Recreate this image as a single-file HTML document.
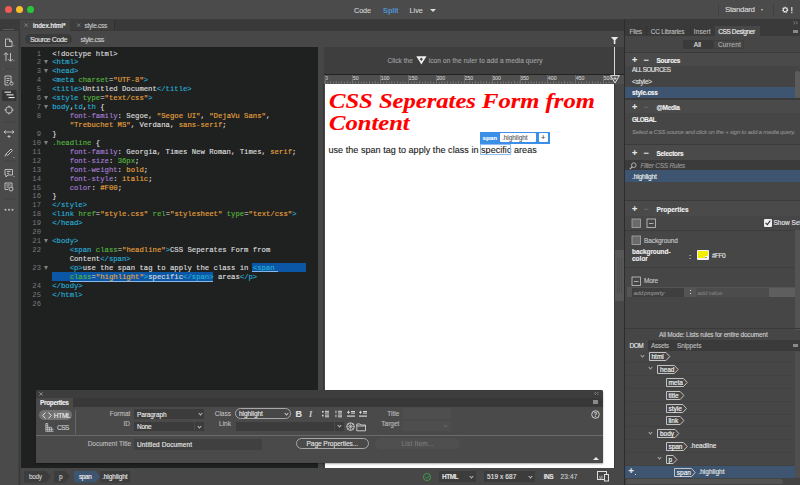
<!DOCTYPE html>
<html><head><meta charset="utf-8">
<style>
*{margin:0;padding:0;box-sizing:border-box}
html,body{width:800px;height:485px;overflow:hidden;background:#484848;font-family:"Liberation Sans",sans-serif;color:#ddd}
.a{position:absolute}
.t{position:absolute;white-space:pre;line-height:1;font-size:7.3px;-webkit-text-stroke:0.12px currentColor}
#code .l{position:absolute;left:52.2px;white-space:pre;font-family:"Liberation Mono",monospace;font-size:7.27px;line-height:9px;color:#dcdcdc;-webkit-text-stroke:0.15px currentColor}
#code .n{position:absolute;width:21px;left:20px;text-align:right;font-family:"Liberation Mono",monospace;font-size:7.2px;line-height:9px;color:#7a7a7a}
#code i{font-style:normal}
#code .fd{position:absolute;left:44px;width:0;height:0;border-left:2.6px solid transparent;border-right:2.6px solid transparent;border-top:4px solid #808080}
.rp{font-size:6.5px}.b{font-weight:bold}.pm{font-size:9px;color:#e8e8e8;font-weight:bold}
.tagb{position:absolute;height:7.6px;border:1px solid #dcdcdc;border-right:none;font-size:6.3px;line-height:5.6px;color:#f0f0f0;padding-left:1.8px;white-space:pre}
.taga{position:absolute;width:5.4px;height:5.4px;border-top:1px solid #dcdcdc;border-right:1px solid #dcdcdc;transform:rotate(45deg) scaleY(0.9)}
.chev{position:absolute;width:3px;height:3px;border-bottom:1px solid #aaa;border-right:1px solid #aaa;transform:rotate(45deg)}
.pl{color:#bdbdbd;text-align:right}
.tg{color:#27aed6}.at{color:#54b33e}.st{color:#e2a13f}.pr{color:#a57ed3}.gr{color:#74b84a}
</style></head><body>
<!-- title bar -->
<div class="a" style="left:0;top:0;width:800px;height:19px;background:#4b4b4b"></div>
<div class="a" style="left:4.5px;top:6px;width:7px;height:7px;border-radius:50%;background:#f25a55"></div>
<div class="a" style="left:15.5px;top:6px;width:7px;height:7px;border-radius:50%;background:#f7be2d"></div>
<div class="a" style="left:26.5px;top:6px;width:7px;height:7px;border-radius:50%;background:#2bc53c"></div>
<div class="t" style="left:354px;letter-spacing:-0.133px;top:7px;color:#d0d0d0">Code</div>
<div class="t" style="left:383px;letter-spacing:0.300px;top:7px;color:#4fa5e8">Split</div>
<div class="t" style="left:409.5px;letter-spacing:0.000px;top:7px;color:#d0d0d0">Live</div>
<div class="t" style="left:725px;letter-spacing:-0.343px;top:6px;color:#d8d8d8;font-size:8px">Standard</div>

<!-- doc tab bar -->
<div class="a" style="left:0;top:19px;width:625px;height:12px;background:#393939"></div>
<div class="a" style="left:20px;top:19px;width:50px;height:12px;background:#454545"></div>
<div class="a" style="left:70px;top:19.5px;width:43.5px;height:10.6px;background:#3d3d3d"></div>
<div class="a" style="left:113.5px;top:20px;width:0.8px;height:10px;background:#303030"></div>



<!-- sub bar -->
<div class="a" style="left:20px;top:31px;width:605px;height:16px;background:#474747"></div>
<div class="a" style="left:25px;top:34px;width:47px;height:10px;border-radius:5px;background:#3a3a3a"></div>
<div class="t" style="left:30px;letter-spacing:-0.500px;top:36px;color:#e0e0e0">Source Code</div>
<div class="t" style="left:80.5px;letter-spacing:-0.500px;top:36px;color:#c8c8c8">style.css</div>


<!-- left toolbar -->
<div class="a" style="left:0;top:19px;width:20px;height:12px;background:#3b3b3b"></div>
<div class="a" style="left:0;top:31px;width:18px;height:454px;background:#4a4a4a"></div>
<div class="a" style="left:18px;top:31px;width:3px;height:454px;background:#424242"></div>
<div class="a" style="left:19.2px;top:31px;width:0.8px;height:454px;background:#3a3a3a"></div>
<div class="a" style="left:3px;top:28.5px;width:11px;height:0.8px;background:#5a5a5a"></div>
<svg class="a" style="left:0;top:31px" width="19" height="190" viewBox="0 0 19 190">
<g fill="none" stroke="#c8c8c8" stroke-width="0.9">
<path d="M5.5 8 H9.5 L12 10.5 V15.5 H5.5 Z M9.5 8 V10.5 H12"/>
<path d="M6 22 V30 M3.8 24 L6 21.7 L8.2 24 M10.5 22 V30 M8.3 28 L10.5 30.3 L12.7 28"/>
<path d="M5 45 H11 V52 M5 45 V54 H9 M6.5 47.5 H9.5 M6.5 49.5 H9.5 M6.5 51.5 H8"/>
<circle cx="11.5" cy="52.5" r="1.6"/>
<circle cx="9" cy="79" r="3.3"/>
<path d="M9 74.5 V76.5 M9 81.5 V83.5 M4.5 79 H6.5 M11.5 79 H13.5"/>
<path d="M4 101 H14 M4 101 L5.8 99.5 M4 101 L5.8 102.5 M14 101 L12.2 99.5 M14 101 L12.2 102.5"/>
<path d="M9 104 V107 M7.5 105.5 H10.5"/>
<path d="M6 123 L11 118 L12.5 119.5 L7.5 124.5 Z M5 125.5 L6 123"/>
<path d="M5 138.5 H12.5 V144 H8 L6 146 V144 H5 Z M7 140.5 H10.5 M7 142.3 H9"/>
<path d="M5 152 H12 V157 M5 152 V158.5 H8 M6.5 154 H10.5 M6.5 156 H9"/>
<circle cx="11" cy="158" r="2"/>
</g>
<g fill="#bdbdbd"><rect x="3" y="37.5" width="0.8" height="0.8"/><rect x="13.5" y="14.3" width="0.9" height="0.9"/><rect x="13.5" y="29.3" width="0.9" height="0.9"/><rect x="13.5" y="126" width="0.9" height="0.9"/><rect x="13.5" y="145" width="0.9" height="0.9"/>
<circle cx="5.5" cy="178.7" r="1"/><circle cx="9" cy="178.7" r="1"/><circle cx="12.5" cy="178.7" r="1"/></g>
<g fill="#434343"><rect x="3" y="37.6" width="13" height="0.9"/><rect x="3" y="90.5" width="13" height="0.9"/><rect x="3" y="129.5" width="13" height="0.9"/><rect x="3" y="167.5" width="13" height="0.9"/></g>
<rect x="2" y="59" width="14.5" height="11" fill="#353535" rx="1"/>
<g fill="#e8e8e8"><rect x="4.5" y="60.6" width="6.5" height="1.1"/><rect x="6.5" y="63.3" width="7" height="1.1"/><rect x="8.5" y="66" width="6" height="1.1"/></g>
</svg>
<!-- title extras -->
<div class="a" style="left:0;top:19px;width:800px;height:0.8px;background:#3c3c3c"></div>
<div class="a" style="left:717.5px;top:4px;width:0.8px;height:11px;background:#3f3f3f"></div>
<div class="a" style="left:773px;top:4px;width:0.8px;height:11px;background:#3f3f3f"></div>
<div class="a" style="left:761px;top:8.8px;width:0;height:0;border-left:1.8px solid transparent;border-right:1.8px solid transparent;border-top:2px solid #ccc"></div>
<div class="a" style="left:429.5px;top:9px;width:0;height:0;border-left:3px solid transparent;border-right:3px solid transparent;border-top:3px solid #ddd"></div>
<svg class="a" style="left:780.5px;top:5.5px" width="13" height="8"><circle cx="4.2" cy="3.8" r="2.4" fill="none" stroke="#eee" stroke-width="1.3" stroke-dasharray="1.2 0.7"/><circle cx="4.2" cy="3.8" r="1.9" fill="none" stroke="#eee" stroke-width="0.9"/><rect x="10.2" y="1" width="1.2" height="4.3" fill="#ddd"/><rect x="10.2" y="6" width="1.2" height="1.2" fill="#ddd"/></svg>
<svg class="a" style="left:23.5px;top:23px" width="60" height="5"><path d="M0.5 0.5 L3.8 3.8 M3.8 0.5 L0.5 3.8 M53 0.5 L56.3 3.8 M56.3 0.5 L53 3.8" stroke="#8a8a8a" stroke-width="0.8"/></svg>
<div class="t rp" style="left:33px;letter-spacing:0.040px;top:22.6px;color:#f4f4f4;-webkit-text-stroke:0.2px #f4f4f4">index.html*</div>
<div class="t rp" style="left:84.4px;letter-spacing:-0.250px;top:22.6px;color:#c8c8c8">style.css</div>
<!-- code editor -->
<div class="a" style="left:21px;top:47px;width:297px;height:421px;background:#1f2020"></div>
<div id="code"><div class="a" style="left:252.2px;top:262.9px;width:54.2px;height:9.1px;background:#0b57a6"></div><div class="a" style="left:52.2px;top:272px;width:161px;height:9.4px;background:#0b57a6"></div><div class="a" style="left:252.2px;top:271.3px;width:26px;height:0.9px;background:#8ab8e6"></div><div class="a" style="left:69.6px;top:280.7px;width:143.6px;height:0.9px;background:#8ab8e6"></div><div class="n" style="top:49.50px">1</div>
<div class="l" style="top:49.50px">&lt;!doctype html&gt;</div>
<div class="n" style="top:58.44px">2</div>
<div class="fd" style="top:60.44px"></div>
<div class="l" style="top:58.44px"><i class="tg">&lt;html&gt;</i></div>
<div class="n" style="top:67.37px">3</div>
<div class="fd" style="top:69.37px"></div>
<div class="l" style="top:67.37px"><i class="tg">&lt;head&gt;</i></div>
<div class="n" style="top:76.31px">4</div>
<div class="l" style="top:76.31px"><i class="tg">&lt;meta</i> <i class="at">charset</i>=<i class="st">"UTF-8"</i><i class="tg">&gt;</i></div>
<div class="n" style="top:85.24px">5</div>
<div class="l" style="top:85.24px"><i class="tg">&lt;title&gt;</i>Untitled Document<i class="tg">&lt;/title&gt;</i></div>
<div class="n" style="top:94.18px">6</div>
<div class="fd" style="top:96.18px"></div>
<div class="l" style="top:94.18px"><i class="tg">&lt;style</i> <i class="at">type</i>=<i class="st">"text/css"</i><i class="tg">&gt;</i></div>
<div class="n" style="top:103.11px">7</div>
<div class="fd" style="top:105.11px"></div>
<div class="l" style="top:103.11px"><i class="tg">body</i>,<i class="tg">td</i>,<i class="tg">th</i> {</div>
<div class="n" style="top:112.05px">8</div>
<div class="l" style="top:112.05px">    <i class="pr">font-family</i>: Segoe, <i class="st">"Segoe UI"</i>, <i class="st">"DejaVu Sans"</i>,</div>
<div class="l" style="top:120.98px">    <i class="st">"Trebuchet MS"</i>, Verdana, <i class="st">sans-serif</i>;</div>
<div class="n" style="top:129.92px">9</div>
<div class="l" style="top:129.92px">}</div>
<div class="n" style="top:138.85px">10</div>
<div class="fd" style="top:140.85px"></div>
<div class="l" style="top:138.85px"><i class="at">.headline</i> {</div>
<div class="n" style="top:147.79px">11</div>
<div class="l" style="top:147.79px">    <i class="pr">font-family</i>: Georgia, Times New Roman, Times, <i class="st">serif</i>;</div>
<div class="n" style="top:156.72px">12</div>
<div class="l" style="top:156.72px">    <i class="pr">font-size</i>: <i class="at">36px</i>;</div>
<div class="n" style="top:165.66px">13</div>
<div class="l" style="top:165.66px">    <i class="pr">font-weight</i>: <i class="st">bold</i>;</div>
<div class="n" style="top:174.59px">14</div>
<div class="l" style="top:174.59px">    <i class="pr">font-style</i>: <i class="st">italic</i>;</div>
<div class="n" style="top:183.53px">15</div>
<div class="l" style="top:183.53px">    <i class="pr">color</i>: <i class="st">#F00</i>;</div>
<div class="n" style="top:192.46px">16</div>
<div class="l" style="top:192.46px">}</div>
<div class="n" style="top:201.40px">17</div>
<div class="l" style="top:201.40px"><i class="tg">&lt;/style&gt;</i></div>
<div class="n" style="top:210.33px">18</div>
<div class="l" style="top:210.33px"><i class="tg">&lt;link</i> <i class="at">href</i>=<i class="st">"style.css"</i> <i class="at">rel</i>=<i class="st">"stylesheet"</i> <i class="at">type</i>=<i class="st">"text/css"</i><i class="tg">&gt;</i></div>
<div class="n" style="top:219.27px">19</div>
<div class="l" style="top:219.27px"><i class="tg">&lt;/head&gt;</i></div>
<div class="n" style="top:228.20px">20</div>
<div class="l" style="top:228.20px"></div>
<div class="n" style="top:237.14px">21</div>
<div class="fd" style="top:239.14px"></div>
<div class="l" style="top:237.14px"><i class="tg">&lt;body&gt;</i></div>
<div class="n" style="top:246.07px">22</div>
<div class="l" style="top:246.07px">    <i class="tg">&lt;span</i> <i class="at">class</i>=<i class="st">"headline"</i><i class="tg">&gt;</i>CSS Seperates Form from</div>
<div class="l" style="top:255.01px">    Content<i class="tg">&lt;/span&gt;</i></div>
<div class="n" style="top:263.94px">23</div>
<div class="fd" style="top:265.94px"></div>
<div class="l" style="top:263.94px">    <i class="tg">&lt;p&gt;</i>use the span tag to apply the class in <i class="tg">&lt;span</i></div>
<div class="l" style="top:272.88px">    <i class="at">class</i>=<i class="st">"highlight"</i><i class="tg">&gt;</i>specific<i class="tg">&lt;/span&gt;</i> areas<i class="tg">&lt;/p&gt;</i></div>
<div class="n" style="top:281.81px">24</div>
<div class="l" style="top:281.81px"><i class="tg">&lt;/body&gt;</i></div>
<div class="n" style="top:290.75px">25</div>
<div class="l" style="top:290.75px"><i class="tg">&lt;/html&gt;</i></div>
<div class="n" style="top:299.68px">26</div>
<div class="l" style="top:299.68px"></div>
</div>

<!-- splitter -->
<div class="a" style="left:318px;top:47px;width:6px;height:421px;background:#464646"></div>


<!-- design view -->
<div class="a" style="left:324px;top:47px;width:300px;height:27px;background:#3e3e3e"></div>
<div class="a" style="left:324px;top:73.5px;width:300px;height:1.5px;background:#232323"></div>
<div class="a" style="left:324px;top:75px;width:300px;height:9px;background:#4f4f4f"></div>
<svg class="a" style="left:324px;top:75px" width="300" height="9"><g fill="#8a8a8a"><rect x="0.60" y="6.3" width="0.8" height="2.2"/><rect x="3.39" y="7.0" width="0.8" height="1.5"/><rect x="6.17" y="6.3" width="0.8" height="2.2"/><rect x="8.96" y="7.0" width="0.8" height="1.5"/><rect x="11.74" y="6.3" width="0.8" height="2.2"/><rect x="14.53" y="7.0" width="0.8" height="1.5"/><rect x="17.31" y="6.3" width="0.8" height="2.2"/><rect x="20.10" y="7.0" width="0.8" height="1.5"/><rect x="22.88" y="6.3" width="0.8" height="2.2"/><rect x="25.67" y="7.0" width="0.8" height="1.5"/><rect x="28.45" y="6.3" width="0.8" height="2.2"/><rect x="31.24" y="7.0" width="0.8" height="1.5"/><rect x="34.02" y="6.3" width="0.8" height="2.2"/><rect x="36.81" y="7.0" width="0.8" height="1.5"/><rect x="39.59" y="6.3" width="0.8" height="2.2"/><rect x="42.38" y="7.0" width="0.8" height="1.5"/><rect x="45.16" y="6.3" width="0.8" height="2.2"/><rect x="47.95" y="7.0" width="0.8" height="1.5"/><rect x="50.73" y="6.3" width="0.8" height="2.2"/><rect x="53.52" y="7.0" width="0.8" height="1.5"/><rect x="56.30" y="6.3" width="0.8" height="2.2"/><rect x="59.09" y="7.0" width="0.8" height="1.5"/><rect x="61.87" y="6.3" width="0.8" height="2.2"/><rect x="64.66" y="7.0" width="0.8" height="1.5"/><rect x="67.44" y="6.3" width="0.8" height="2.2"/><rect x="70.23" y="7.0" width="0.8" height="1.5"/><rect x="73.01" y="6.3" width="0.8" height="2.2"/><rect x="75.80" y="7.0" width="0.8" height="1.5"/><rect x="78.58" y="6.3" width="0.8" height="2.2"/><rect x="81.37" y="7.0" width="0.8" height="1.5"/><rect x="84.15" y="6.3" width="0.8" height="2.2"/><rect x="86.94" y="7.0" width="0.8" height="1.5"/><rect x="89.72" y="6.3" width="0.8" height="2.2"/><rect x="92.50" y="7.0" width="0.8" height="1.5"/><rect x="95.29" y="6.3" width="0.8" height="2.2"/><rect x="98.08" y="7.0" width="0.8" height="1.5"/><rect x="100.86" y="6.3" width="0.8" height="2.2"/><rect x="103.65" y="7.0" width="0.8" height="1.5"/><rect x="106.43" y="6.3" width="0.8" height="2.2"/><rect x="109.22" y="7.0" width="0.8" height="1.5"/><rect x="112.00" y="6.3" width="0.8" height="2.2"/><rect x="114.79" y="7.0" width="0.8" height="1.5"/><rect x="117.57" y="6.3" width="0.8" height="2.2"/><rect x="120.36" y="7.0" width="0.8" height="1.5"/><rect x="123.14" y="6.3" width="0.8" height="2.2"/><rect x="125.93" y="7.0" width="0.8" height="1.5"/><rect x="128.71" y="6.3" width="0.8" height="2.2"/><rect x="131.50" y="7.0" width="0.8" height="1.5"/><rect x="134.28" y="6.3" width="0.8" height="2.2"/><rect x="137.07" y="7.0" width="0.8" height="1.5"/><rect x="139.85" y="6.3" width="0.8" height="2.2"/><rect x="142.64" y="7.0" width="0.8" height="1.5"/><rect x="145.42" y="6.3" width="0.8" height="2.2"/><rect x="148.21" y="7.0" width="0.8" height="1.5"/><rect x="150.99" y="6.3" width="0.8" height="2.2"/><rect x="153.78" y="7.0" width="0.8" height="1.5"/><rect x="156.56" y="6.3" width="0.8" height="2.2"/><rect x="159.35" y="7.0" width="0.8" height="1.5"/><rect x="162.13" y="6.3" width="0.8" height="2.2"/><rect x="164.92" y="7.0" width="0.8" height="1.5"/><rect x="167.70" y="6.3" width="0.8" height="2.2"/><rect x="170.49" y="7.0" width="0.8" height="1.5"/><rect x="173.27" y="6.3" width="0.8" height="2.2"/><rect x="176.06" y="7.0" width="0.8" height="1.5"/><rect x="178.84" y="6.3" width="0.8" height="2.2"/><rect x="181.62" y="7.0" width="0.8" height="1.5"/><rect x="184.41" y="6.3" width="0.8" height="2.2"/><rect x="187.20" y="7.0" width="0.8" height="1.5"/><rect x="189.98" y="6.3" width="0.8" height="2.2"/><rect x="192.77" y="7.0" width="0.8" height="1.5"/><rect x="195.55" y="6.3" width="0.8" height="2.2"/><rect x="198.34" y="7.0" width="0.8" height="1.5"/><rect x="201.12" y="6.3" width="0.8" height="2.2"/><rect x="203.90" y="7.0" width="0.8" height="1.5"/><rect x="206.69" y="6.3" width="0.8" height="2.2"/><rect x="209.48" y="7.0" width="0.8" height="1.5"/><rect x="212.26" y="6.3" width="0.8" height="2.2"/><rect x="215.05" y="7.0" width="0.8" height="1.5"/><rect x="217.83" y="6.3" width="0.8" height="2.2"/><rect x="220.62" y="7.0" width="0.8" height="1.5"/><rect x="223.40" y="6.3" width="0.8" height="2.2"/><rect x="226.18" y="7.0" width="0.8" height="1.5"/><rect x="228.97" y="6.3" width="0.8" height="2.2"/><rect x="231.76" y="7.0" width="0.8" height="1.5"/><rect x="234.54" y="6.3" width="0.8" height="2.2"/><rect x="237.33" y="7.0" width="0.8" height="1.5"/><rect x="240.11" y="6.3" width="0.8" height="2.2"/><rect x="242.89" y="7.0" width="0.8" height="1.5"/><rect x="245.68" y="6.3" width="0.8" height="2.2"/><rect x="248.47" y="7.0" width="0.8" height="1.5"/><rect x="251.25" y="6.3" width="0.8" height="2.2"/><rect x="254.04" y="7.0" width="0.8" height="1.5"/><rect x="256.82" y="6.3" width="0.8" height="2.2"/><rect x="259.61" y="7.0" width="0.8" height="1.5"/><rect x="262.39" y="6.3" width="0.8" height="2.2"/><rect x="265.17" y="7.0" width="0.8" height="1.5"/><rect x="267.96" y="6.3" width="0.8" height="2.2"/><rect x="270.75" y="7.0" width="0.8" height="1.5"/><rect x="273.53" y="6.3" width="0.8" height="2.2"/><rect x="276.32" y="7.0" width="0.8" height="1.5"/><rect x="279.10" y="6.3" width="0.8" height="2.2"/><rect x="281.88" y="7.0" width="0.8" height="1.5"/><rect x="284.67" y="6.3" width="0.8" height="2.2"/><rect x="287.46" y="7.0" width="0.8" height="1.5"/></g></svg>
<div class="t" style="left:325.00px;top:76.3px;font-size:5.3px;color:#c8c8c8">0</div>
<div class="a" style="left:324.60px;top:75px;width:0.8px;height:9px;background:#6e6e6e"></div>
<div class="t" style="left:352.85px;top:76.3px;font-size:5.3px;color:#c8c8c8">50</div>
<div class="a" style="left:352.45px;top:75px;width:0.8px;height:9px;background:#6e6e6e"></div>
<div class="t" style="left:380.70px;top:76.3px;font-size:5.3px;color:#c8c8c8">100</div>
<div class="a" style="left:380.30px;top:75px;width:0.8px;height:9px;background:#6e6e6e"></div>
<div class="t" style="left:408.55px;top:76.3px;font-size:5.3px;color:#c8c8c8">150</div>
<div class="a" style="left:408.15px;top:75px;width:0.8px;height:9px;background:#6e6e6e"></div>
<div class="t" style="left:436.40px;top:76.3px;font-size:5.3px;color:#c8c8c8">200</div>
<div class="a" style="left:436.00px;top:75px;width:0.8px;height:9px;background:#6e6e6e"></div>
<div class="t" style="left:464.25px;top:76.3px;font-size:5.3px;color:#c8c8c8">250</div>
<div class="a" style="left:463.85px;top:75px;width:0.8px;height:9px;background:#6e6e6e"></div>
<div class="t" style="left:492.10px;top:76.3px;font-size:5.3px;color:#c8c8c8">300</div>
<div class="a" style="left:491.70px;top:75px;width:0.8px;height:9px;background:#6e6e6e"></div>
<div class="t" style="left:519.95px;top:76.3px;font-size:5.3px;color:#c8c8c8">350</div>
<div class="a" style="left:519.55px;top:75px;width:0.8px;height:9px;background:#6e6e6e"></div>
<div class="t" style="left:547.80px;top:76.3px;font-size:5.3px;color:#c8c8c8">400</div>
<div class="a" style="left:547.40px;top:75px;width:0.8px;height:9px;background:#6e6e6e"></div>
<div class="t" style="left:575.65px;top:76.3px;font-size:5.3px;color:#c8c8c8">450</div>
<div class="a" style="left:575.25px;top:75px;width:0.8px;height:9px;background:#6e6e6e"></div>
<div class="t" style="left:603.50px;top:76.3px;font-size:5.3px;color:#c8c8c8">500</div>
<div class="a" style="left:603.10px;top:75px;width:0.8px;height:9px;background:#6e6e6e"></div>
<div class="a" style="left:324.5px;top:84px;width:289.5px;height:384px;background:#fff"></div>
<div class="a" style="left:323.3px;top:84px;width:1.2px;height:384px;background:#353535"></div>
<div class="a" style="left:614px;top:84px;width:10px;height:384px;background:#474747"></div>
<div class="a" style="left:614px;top:84px;width:1px;height:384px;background:#3a3a3a"></div>
<div class="a" style="left:615px;top:250px;width:8.5px;height:51px;background:#575757"></div>
<svg class="a" style="left:616px;top:258px" width="7" height="35"><g fill="#4a4a4a"><rect x="1" y="0" width="0.7" height="35"/><rect x="3" y="0" width="0.7" height="35"/><rect x="5" y="0" width="0.7" height="35"/></g></svg>
<div class="t rp" style="left:387.5px;letter-spacing:0.050px;top:58.3px;color:#a0a0a0">Click the</div>
<svg class="a" style="left:415.5px;top:55.6px" width="11" height="9"><path d="M0.3 0.3 H10.5 L5.4 8.5 Z" fill="#f0f0f0"/><path d="M5.3 1.6 L6.9 3.3 L5.3 5 L3.7 3.3 Z" fill="#444"/></svg>
<div class="t rp" style="left:428.7px;letter-spacing:0.119px;top:58.3px;color:#a0a0a0">icon on the ruler to add a media query</div>
<div class="a" style="left:613.8px;top:47px;width:0.9px;height:29px;background:#d8d8d8"></div>
<svg class="a" style="left:610.8px;top:36.5px" width="7.5" height="7.5"><path d="M0 0 H7.2 L4.4 3.2 V7.2 H2.8 V3.2 Z" fill="#e8e8e8"/></svg>
<svg class="a" style="left:609.5px;top:74.8px" width="10" height="9"><path d="M0.6 0.6 H9.4 L5 8 Z" fill="#555" stroke="#e0e0e0" stroke-width="1"/><path d="M5 1.8 V5 M3.4 3.4 H6.6" stroke="#e0e0e0" stroke-width="0.8"/></svg>
<div class="t" style="left:329.3px;top:89.5px;font-family:'Liberation Serif',serif;font-weight:bold;font-style:italic;font-size:22px;color:#fe0000;transform:scaleX(1.118);transform-origin:0 0">CSS Seperates Form from</div>
<div class="t" style="left:329.3px;top:112px;font-family:'Liberation Serif',serif;font-weight:bold;font-style:italic;font-size:22px;color:#fe0000;transform:scaleX(1.118);transform-origin:0 0">Content</div>
<div class="t" style="left:328.5px;top:145.8px;font-size:9px;color:#1a1a1a;letter-spacing:0.05px">use the span tag to apply the class in specific areas</div>
<div class="a" style="left:480px;top:144px;width:30.5px;height:10.5px;border:1px solid #8fbdf0"></div>
<div class="a" style="left:480px;top:131.7px;width:70.4px;height:12px;background:#3b8fe6"></div>
<div class="t b" style="left:482.5px;top:134.5px;font-size:6.2px;color:#fff">span</div>
<div class="a" style="left:499.8px;top:133.4px;width:36px;height:8.6px;background:#fff;border-radius:1px"></div>
<div class="t" style="left:502px;top:134.8px;font-size:6.4px;color:#5a5a5a">.highlight</div>
<div class="a" style="left:538.8px;top:133.4px;width:9px;height:8.6px;background:#fff;border-radius:1px"></div>
<div class="t" style="left:541.1px;top:133.6px;font-size:7.5px;color:#444">+</div>
<!-- right panel -->
<div class="a" style="left:624px;top:19px;width:1px;height:466px;background:#2c2c2c"></div>
<div class="a" style="left:625px;top:19px;width:175px;height:466px;background:#464646"></div>
<div class="a" style="left:625px;top:19px;width:175px;height:16.5px;background:#3a3a3a"></div>
<svg class="a" style="left:793px;top:20.5px" width="6" height="4"><path d="M0.5 0.3 L2 1.8 L0.5 3.3 M3 0.3 L4.5 1.8 L3 3.3" fill="none" stroke="#9a9a9a" stroke-width="0.7"/></svg>
<div class="a" style="left:646px;top:26px;width:1px;height:9.5px;background:#333"></div>
<div class="a" style="left:690px;top:26px;width:1px;height:9.5px;background:#333"></div>
<div class="a" style="left:715px;top:25.5px;width:45px;height:10px;background:#474747"></div>
<div class="t rp" style="left:629.5px;letter-spacing:-0.300px;top:28.5px;color:#bdbdbd">Files</div>
<div class="t rp" style="left:650.8px;letter-spacing:-0.218px;top:28.5px;color:#bdbdbd">CC Libraries</div>
<div class="t rp" style="left:693.8px;letter-spacing:0.080px;top:28.5px;color:#bdbdbd">Insert</div>
<div class="t rp" style="left:718.3px;letter-spacing:-0.400px;top:28.5px;color:#f0f0f0">CSS Designer</div>
<div class="a" style="left:793px;top:29.5px;width:5px;height:3.5px;background:#8a8a8a"></div>
<!-- all/current -->
<div class="a" style="left:683px;top:39.5px;width:30px;height:9.7px;background:#3a3a3a;border-radius:1px"></div>
<div class="a" style="left:713px;top:39.5px;width:31px;height:9.7px;border:1px solid #3e3e3e;border-radius:1px"></div>
<div class="t rp" style="left:693.8px;letter-spacing:-0.000px;top:42px;color:#e0e0e0">All</div>
<div class="t rp" style="left:717.9px;letter-spacing:0.200px;top:42px;color:#b0b0b0">Current</div>
<!-- sources -->
<div class="a" style="left:625px;top:52px;width:175px;height:1px;background:#3a3a3a"></div>
<div class="a" style="left:625px;top:53px;width:175px;height:12.5px;background:#4a4a4a"></div>
<div class="a" style="left:625px;top:65.5px;width:170px;height:21px;background:#444"></div>
<div class="a" style="left:625px;top:86.6px;width:170px;height:11.4px;background:#3d5570"></div>
<div class="a" style="left:795px;top:70.5px;width:5px;height:28px;background:#5c5c5c;border-radius:2px"></div>
<div class="t rp pm" style="left:632px;top:56px">+</div>
<div class="t rp pm" style="left:643.5px;top:56px">&#8722;</div>
<div class="t rp b" style="left:656.4px;letter-spacing:-0.267px;top:58px;color:#f2f2f2">Sources</div>
<div class="t rp" style="left:632px;letter-spacing:-0.500px;top:67.3px;color:#e6e6e6;font-size:6.3px">ALL SOURCES</div>
<div class="t rp" style="left:632px;letter-spacing:-0.133px;top:78.5px;color:#e6e6e6">&lt;style&gt;</div>
<div class="t rp b" style="left:632px;letter-spacing:-0.200px;top:89.8px;color:#f5f5f5">style.css</div>
<!-- media -->
<div class="a" style="left:625px;top:98px;width:175px;height:1.5px;background:#3a3a3a"></div>
<div class="a" style="left:625px;top:99.5px;width:175px;height:13.5px;background:#4a4a4a"></div>
<div class="t rp pm" style="left:632px;top:103px">+</div>
<div class="t rp pm" style="left:643.5px;top:103px;color:#666">&#8722;</div>
<div class="t rp b" style="left:656.4px;letter-spacing:-0.240px;top:105px;color:#f2f2f2">@Media</div>
<div class="t rp b" style="left:632px;letter-spacing:-0.500px;top:117.3px;color:#f0f0f0;font-size:6.4px">GLOBAL</div>
<div class="t rp" style="left:632px;letter-spacing:-0.238px;top:128.5px;color:#8c8c8c;font-style:italic;font-size:6.1px">Select a CSS source and click on the + sign to add a media query.</div>
<!-- selectors -->
<div class="a" style="left:625px;top:143.5px;width:175px;height:1.5px;background:#3a3a3a"></div>
<div class="a" style="left:625px;top:145px;width:175px;height:15px;background:#4a4a4a"></div>
<div class="t rp pm" style="left:632px;top:149px">+</div>
<div class="t rp pm" style="left:643.5px;top:149px">&#8722;</div>
<div class="t rp b" style="left:656.4px;letter-spacing:-0.250px;top:150.7px;color:#f2f2f2">Selectors</div>
<div class="a" style="left:625px;top:160px;width:175px;height:10.3px;background:#3b3b3b"></div>
<div class="t rp" style="left:640.5px;letter-spacing:-0.213px;top:162.5px;color:#9a9a9a;font-style:italic">Filter CSS Rules</div>
<div class="a" style="left:625px;top:170.3px;width:175px;height:12.2px;background:#3d5570"></div>
<div class="t rp" style="left:632px;letter-spacing:-0.133px;top:173.5px;color:#f5f5f5">.highlight</div>
<!-- properties -->
<div class="a" style="left:625px;top:199.5px;width:175px;height:1.5px;background:#3a3a3a"></div>
<div class="a" style="left:625px;top:201px;width:175px;height:14.5px;background:#4a4a4a"></div>
<div class="t rp pm" style="left:632px;top:204.5px">+</div>
<div class="t rp pm" style="left:643.5px;top:204.5px;color:#666">&#8722;</div>
<div class="t rp b" style="left:656.4px;top:206.5px;color:#f2f2f2">Properties</div>
<div class="a" style="left:625px;top:229.5px;width:175px;height:1px;background:#3c3c3c"></div>
<div class="t rp" style="left:773.5px;top:220.3px;color:#ececec">Show Set</div>
<div class="a" style="left:764px;top:219.2px;width:7.6px;height:7.6px;background:#eee;border-radius:1px"></div>
<svg class="a" style="left:764px;top:219.2px" width="8" height="8"><path d="M1.6 3.8 L3.3 5.6 L6.3 1.6" fill="none" stroke="#333" stroke-width="1.1"/></svg>
<svg class="a" style="left:631px;top:217.5px" width="30" height="11"><rect x="1" y="1" width="8.5" height="8.5" fill="#6a6a6a" stroke="#aaa" stroke-width="0.8"/><rect x="16" y="1" width="8.5" height="8.5" fill="none" stroke="#c8c8c8" stroke-width="0.8"/><rect x="18" y="5" width="4.5" height="0.8" fill="#c8c8c8"/></svg>
<svg class="a" style="left:631px;top:235px" width="11" height="11"><rect x="1" y="1" width="8.5" height="8.5" fill="#6a6a6a" stroke="#aaa" stroke-width="0.8"/></svg>
<svg class="a" style="left:631px;top:275.5px" width="11" height="11"><rect x="1" y="1" width="8.5" height="8.5" fill="none" stroke="#c8c8c8" stroke-width="0.8"/><rect x="3" y="5" width="4.5" height="0.8" fill="#c8c8c8"/></svg>
<svg class="a" style="left:628.5px;top:161.8px" width="8" height="8"><circle cx="4.8" cy="3.2" r="2.3" fill="none" stroke="#bbb" stroke-width="0.9"/><path d="M3.2 4.8 L0.8 7.2" stroke="#bbb" stroke-width="1.1"/></svg>
<div class="t rp" style="left:644px;letter-spacing:-0.089px;top:237.5px;color:#c8c8c8">Background</div>
<div class="t rp b" style="left:632px;letter-spacing:-0.080px;top:248.8px;color:#f0f0f0">background-</div>
<div class="t rp b" style="left:632px;top:256px;color:#f0f0f0">color</div>
<div class="t rp b" style="left:689px;top:253.5px;color:#ccc">:</div>
<div class="a" style="left:697px;top:250px;width:12px;height:9.8px;background:#f4f4f4;border-radius:1px"></div>
<div class="a" style="left:698.4px;top:251.4px;width:9.2px;height:7px;background:#f2ef00"></div>
<div class="a" style="left:704.6px;top:256.2px;width:3px;height:2.2px;background:#fff"></div>
<div class="a" style="left:705.3px;top:256.8px;width:0;height:0;border-left:0.9px solid transparent;border-right:0.9px solid transparent;border-top:1.2px solid #333"></div>
<div class="t rp" style="left:712px;letter-spacing:-0.500px;top:253.2px;color:#e6e6e6">#FF0</div>
<div class="a" style="left:625px;top:267px;width:170px;height:1px;background:#3e3e3e"></div>
<div class="t rp" style="left:644px;letter-spacing:-0.267px;top:277.5px;color:#c8c8c8">More</div>
<div class="a" style="left:626.5px;top:286.8px;width:168px;height:10.6px;background:#545454"></div>
<div class="a" style="left:632px;top:287.5px;width:51.5px;height:9.4px;background:#3f3f3f"></div>
<div class="a" style="left:696px;top:287.5px;width:72.5px;height:9.4px;background:#4c4c4c"></div>
<div class="a" style="left:768.5px;top:287.5px;width:26px;height:9.4px;background:#5e5e5e"></div>
<div class="a" style="left:689.5px;top:290px;width:1.2px;height:1.2px;background:#ddd"></div><div class="a" style="left:689.5px;top:293px;width:1.2px;height:1.2px;background:#ddd"></div>
<div class="t rp" style="left:633.5px;letter-spacing:-0.364px;top:289.8px;color:#8a8a8a;font-style:italic;font-size:6.2px">add property</div>
<div class="t rp" style="left:697.5px;letter-spacing:-0.250px;top:289.8px;color:#7a7a7a;font-style:italic;font-size:6.2px">add value</div>
<div class="a" style="left:795px;top:230px;width:5px;height:100px;background:#535353"></div>
<div class="a" style="left:625px;top:328px;width:175px;height:1px;background:#3a3a3a"></div>
<div class="t rp" style="left:659px;letter-spacing:-0.180px;top:331.5px;color:#cfcfcf">All Mode: Lists rules for entire document</div>
<!-- DOM -->
<div class="a" style="left:625px;top:340px;width:175px;height:10.5px;background:#3a3a3a"></div>
<div class="a" style="left:625px;top:340px;width:23px;height:10.5px;background:#474747"></div>
<div class="t rp" style="left:629.5px;letter-spacing:-0.500px;top:342.7px;color:#f0f0f0">DOM</div>
<div class="t rp" style="left:651px;letter-spacing:-0.320px;top:342.7px;color:#bdbdbd">Assets</div>
<div class="t rp" style="left:677px;letter-spacing:-0.114px;top:342.7px;color:#bdbdbd">Snippets</div>
<div class="a" style="left:793px;top:343.5px;width:5px;height:3.5px;background:#8a8a8a"></div>
<div class="a" style="left:625px;top:362.15px;width:170px;height:1px;background:#424242"></div>
<div class="chev" style="left:640.60px;top:353.60px"></div>
<svg class="a" style="left:648.60px;top:352px" width="22.0" height="9" viewBox="0 0 22.0 9"><path d="M0.5 0.5 H17.0 L20.7 4.5 L17.0 8.5 H0.5 Z" fill="none" stroke="#c4c4c4" stroke-width="1" stroke-linejoin="round"/></svg>
<div class="t" style="left:651.50px;top:353.60px;font-size:6.5px;color:#f4f4f4;-webkit-text-stroke:0.15px #f4f4f4">html</div>
<div class="a" style="left:625px;top:375.00px;width:170px;height:1px;background:#424242"></div>
<div class="chev" style="left:649.05px;top:366.45px"></div>
<svg class="a" style="left:657.05px;top:365px" width="22.4" height="9" viewBox="0 0 22.4 9"><path d="M0.5 0.5 H17.4 L21.1 4.5 L17.4 8.5 H0.5 Z" fill="none" stroke="#c4c4c4" stroke-width="1" stroke-linejoin="round"/></svg>
<div class="t" style="left:659.95px;top:366.60px;font-size:6.5px;color:#f4f4f4;-webkit-text-stroke:0.15px #f4f4f4">head</div>
<div class="a" style="left:625px;top:387.85px;width:170px;height:1px;background:#424242"></div>
<svg class="a" style="left:665.50px;top:378px" width="22.5" height="9" viewBox="0 0 22.5 9"><path d="M0.5 0.5 H17.5 L21.2 4.5 L17.5 8.5 H0.5 Z" fill="none" stroke="#c4c4c4" stroke-width="1" stroke-linejoin="round"/></svg>
<div class="t" style="left:668.40px;top:379.60px;font-size:6.5px;color:#f4f4f4;-webkit-text-stroke:0.15px #f4f4f4">meta</div>
<div class="a" style="left:625px;top:400.70px;width:170px;height:1px;background:#424242"></div>
<svg class="a" style="left:665.50px;top:391px" width="19.2" height="9" viewBox="0 0 19.2 9"><path d="M0.5 0.5 H14.2 L17.9 4.5 L14.2 8.5 H0.5 Z" fill="none" stroke="#c4c4c4" stroke-width="1" stroke-linejoin="round"/></svg>
<div class="t" style="left:668.40px;top:392.60px;font-size:6.5px;color:#f4f4f4;-webkit-text-stroke:0.15px #f4f4f4">title</div>
<div class="a" style="left:625px;top:413.55px;width:170px;height:1px;background:#424242"></div>
<svg class="a" style="left:665.50px;top:404px" width="21.8" height="9" viewBox="0 0 21.8 9"><path d="M0.5 0.5 H16.8 L20.5 4.5 L16.8 8.5 H0.5 Z" fill="none" stroke="#c4c4c4" stroke-width="1" stroke-linejoin="round"/></svg>
<div class="t" style="left:668.40px;top:405.60px;font-size:6.5px;color:#f4f4f4;-webkit-text-stroke:0.15px #f4f4f4">style</div>
<div class="a" style="left:625px;top:426.40px;width:170px;height:1px;background:#424242"></div>
<svg class="a" style="left:665.50px;top:416px" width="19.2" height="9" viewBox="0 0 19.2 9"><path d="M0.5 0.5 H14.2 L17.9 4.5 L14.2 8.5 H0.5 Z" fill="none" stroke="#c4c4c4" stroke-width="1" stroke-linejoin="round"/></svg>
<div class="t" style="left:668.40px;top:417.60px;font-size:6.5px;color:#f4f4f4;-webkit-text-stroke:0.15px #f4f4f4">link</div>
<div class="a" style="left:625px;top:439.25px;width:170px;height:1px;background:#424242"></div>
<div class="chev" style="left:649.05px;top:430.70px"></div>
<svg class="a" style="left:657.05px;top:429px" width="23.1" height="9" viewBox="0 0 23.1 9"><path d="M0.5 0.5 H18.1 L21.8 4.5 L18.1 8.5 H0.5 Z" fill="none" stroke="#c4c4c4" stroke-width="1" stroke-linejoin="round"/></svg>
<div class="t" style="left:659.95px;top:430.60px;font-size:6.5px;color:#f4f4f4;-webkit-text-stroke:0.15px #f4f4f4">body</div>
<div class="a" style="left:625px;top:452.10px;width:170px;height:1px;background:#424242"></div>
<svg class="a" style="left:665.50px;top:442px" width="22.5" height="9" viewBox="0 0 22.5 9"><path d="M0.5 0.5 H17.5 L21.2 4.5 L17.5 8.5 H0.5 Z" fill="none" stroke="#c4c4c4" stroke-width="1" stroke-linejoin="round"/></svg>
<div class="t" style="left:668.40px;top:443.60px;font-size:6.5px;color:#f4f4f4;-webkit-text-stroke:0.15px #f4f4f4">span</div>
<div class="t rp" style="left:690.00px;top:442.85px;color:#eaeaea">.headline</div>
<div class="a" style="left:625px;top:464.95px;width:170px;height:1px;background:#424242"></div>
<div class="chev" style="left:657.50px;top:456.40px"></div>
<svg class="a" style="left:665.50px;top:455px" width="12.2" height="9" viewBox="0 0 12.2 9"><path d="M0.5 0.5 H7.2 L10.9 4.5 L7.2 8.5 H0.5 Z" fill="none" stroke="#c4c4c4" stroke-width="1" stroke-linejoin="round"/></svg>
<div class="t" style="left:668.40px;top:456.60px;font-size:6.5px;color:#f4f4f4;-webkit-text-stroke:0.15px #f4f4f4">p</div>
<div class="a" style="left:625px;top:466.45px;width:169.5px;height:11.8px;background:#3d5570"></div>
<div class="t" style="left:628.5px;top:467.25px;font-size:9px;font-weight:bold;color:#e8e8e8">+</div>
<div class="a" style="left:634.5px;top:473.85px;width:1px;height:1px;background:#ddd"></div>
<svg class="a" style="left:673.95px;top:468px" width="22.5" height="9" viewBox="0 0 22.5 9"><path d="M0.5 0.5 H17.5 L21.2 4.5 L17.5 8.5 H0.5 Z" fill="none" stroke="#c4c4c4" stroke-width="1" stroke-linejoin="round"/></svg>
<div class="t" style="left:676.85px;top:469.60px;font-size:6.5px;color:#f4f4f4;-webkit-text-stroke:0.15px #f4f4f4">span</div>
<div class="t rp" style="left:698.45px;top:468.55px;color:#eaeaea">.highlight</div>
<div class="a" style="left:795px;top:351px;width:5px;height:127px;background:#4f4f4f;border-radius:2.5px"></div>
<div class="a" style="left:625px;top:478px;width:175px;height:7px;background:#434343"></div>
<div class="a" style="left:626px;top:479px;width:157px;height:5px;background:#535353;border-radius:2.5px"></div>


<!-- status bar -->
<div class="a" style="left:21px;top:467.5px;width:603px;height:17.5px;background:#474747"></div>
<svg class="a" style="left:24px;top:471px" width="110" height="12" viewBox="0 0 110 12">
<path d="M0 0 H22 L27 5.75 L22 11.5 H0 Z" fill="#3c3c3c"/>
<path d="M30 0 H41 L46 5.75 L41 11.5 H30 Z" fill="#3c3c3c"/>
<path d="M50 0 H71 L76 5.75 L71 11.5 H50 Z" fill="#3d5570"/>
<rect x="76" y="0" width="30" height="11.5" fill="#3c3c3c"/>
<path d="M71 0 L76 5.75 L71 11.5 Z" fill="#3d5570"/>
</svg>
<div class="t rp" style="left:29px;letter-spacing:-0.400px;top:474px;color:#cfcfcf">body</div>
<div class="t rp" style="left:59px;top:474px;color:#cfcfcf">p</div>
<div class="t rp" style="left:79px;letter-spacing:-0.400px;top:474px;color:#f0f0f0">span</div>
<div class="t rp" style="left:102px;letter-spacing:-0.044px;top:474px;color:#eaeaea">.highlight</div>
<div class="a" style="left:423px;top:473px;width:7.5px;height:7.5px;border:1px solid #3da24c;border-radius:50%"></div>
<svg class="a" style="left:424.5px;top:475px" width="5" height="4"><path d="M0.6 2 L2 3.3 L4.4 0.6" fill="none" stroke="#3da24c" stroke-width="0.9"/></svg>
<div class="a" style="left:439px;top:471.4px;width:36.5px;height:10.6px;background:#3c3c3c"></div>
<div class="t rp b" style="left:442px;letter-spacing:-0.500px;top:474.2px;color:#e0e0e0">HTML</div>
<div class="chev" style="left:469.5px;top:474.5px;border-color:#bbb"></div>
<div class="a" style="left:484px;top:471.4px;width:50.6px;height:10.6px;background:#3c3c3c"></div>
<div class="t rp" style="left:487px;letter-spacing:0.100px;top:474.2px;color:#e8e8e8">519 x 687</div>
<div class="chev" style="left:529px;top:474.5px;border-color:#bbb"></div>
<div class="t rp b" style="left:543.8px;letter-spacing:-0.500px;top:474.2px;color:#e0e0e0">INS</div>
<div class="t rp" style="left:560.4px;letter-spacing:0.200px;top:474.2px;color:#d0d0d0">23:47</div>
<svg class="a" style="left:597px;top:471px" width="13" height="11"><rect x="0.5" y="0.5" width="9" height="8" fill="none" stroke="#ddd"/><rect x="7.5" y="3.5" width="4" height="6.5" fill="#474747" stroke="#ddd"/><text x="2" y="7.5" font-size="5" fill="#ddd" font-family="Liberation Sans">vi</text></svg>

<!-- properties panel -->
<div class="a" style="left:36px;top:390px;width:567px;height:73px;background:#4a4a4a;border-radius:2px 2px 0 0;box-shadow:0 1px 2px rgba(0,0,0,.35)"></div>
<div class="a" style="left:36px;top:390px;width:567px;height:7.5px;background:#3d3d3d;border-radius:2px 2px 0 0"></div>
<div class="a" style="left:36px;top:397.5px;width:567px;height:9.1px;background:#383838"></div>
<div class="a" style="left:36px;top:397.5px;width:37px;height:9.1px;background:#4a4a4a"></div>
<svg class="a" style="left:38.5px;top:391.8px" width="4" height="4"><path d="M0.3 0.3 L3.7 3.7 M3.7 0.3 L0.3 3.7" stroke="#999" stroke-width="0.8"/></svg>
<div class="t rp b" style="left:40px;letter-spacing:-0.356px;top:399.8px;color:#f0f0f0">Properties</div>
<svg class="a" style="left:594px;top:392px" width="5" height="3"><path d="M2 0 L0.5 1.5 L2 3 M4.5 0 L3 1.5 L4.5 3" fill="none" stroke="#999" stroke-width="0.7"/></svg>
<div class="a" style="left:593px;top:400px;width:5px;height:3.8px;background:#8a8a8a"></div>
<div class="a" style="left:39px;top:410px;width:33px;height:10px;border-radius:5px;background:#727272"></div>
<svg class="a" style="left:41.5px;top:411.5px" width="10" height="7"><path d="M3.5 0.5 L0.8 3.5 L3.5 6.5 M6.5 0.5 L9.2 3.5 L6.5 6.5" fill="none" stroke="#eee" stroke-width="0.9"/></svg>
<div class="t rp" style="left:53.8px;letter-spacing:-0.267px;top:412.6px;color:#f0f0f0">HTML</div>
<svg class="a" style="left:45px;top:422.5px" width="9" height="9"><path d="M0.8 0.5 V8.3 H8.5 M0.8 2.4 H2.7 M0.8 4.3 H4.6 M0.8 6.3 H8.5 M2.7 2.4 V8.3 M4.6 4.3 V8.3 M6.6 6.3 V8.3 M0.8 0.5 H2.7 V2.4 M4.6 4.3 H6.6 V6.3" fill="none" stroke="#cfcfcf" stroke-width="0.75"/></svg>
<div class="t rp" style="left:57px;letter-spacing:-0.500px;top:425px;color:#d0d0d0;font-size:6.5px">CSS</div>
<div class="a" style="left:75px;top:410px;width:1px;height:24px;background:#676767"></div>
<div class="a" style="left:36px;top:434.8px;width:567px;height:1px;background:#6b6b6b"></div>
<div class="t rp pl" style="right:669.7px;top:411.2px">Format</div>
<div class="t rp pl" style="right:670px;top:421px">ID</div>
<div class="t rp pl" style="right:669px;top:441.2px">Document Title</div>
<div class="a" style="left:134px;top:409.4px;width:70px;height:9.4px;background:#3c3c3c"></div>
<div class="t rp" style="left:137px;letter-spacing:-0.100px;top:411.6px;color:#eaeaea">Paragraph</div>
<div class="chev" style="left:198.8px;top:412.3px;border-color:#bbb"></div>
<div class="a" style="left:134px;top:422px;width:59.6px;height:9px;background:#3c3c3c"></div>
<div class="a" style="left:194.5px;top:422px;width:9.5px;height:9px;background:#3c3c3c"></div>
<div class="t rp" style="left:137px;letter-spacing:-0.267px;top:424.2px;color:#eaeaea">None</div>
<div class="chev" style="left:198.3px;top:424.7px;border-color:#bbb"></div>
<div class="a" style="left:134px;top:439px;width:128px;height:10.7px;background:#404040"></div>
<div class="t rp" style="left:137px;letter-spacing:0.100px;top:441.8px;color:#eaeaea">Untitled Document</div>
<div class="t rp pl" style="right:569px;top:411.2px">Class</div>
<div class="t rp pl" style="right:569px;top:421px">Link</div>
<div class="a" style="left:235px;top:408px;width:55.6px;height:11.4px;border:1px solid #a8a8a8;border-radius:6px;background:#474747"></div>
<div class="t rp" style="left:239px;letter-spacing:-0.050px;top:411px;color:#eaeaea">highlight</div>
<div class="chev" style="left:284.5px;top:411.8px;border-color:#ccc"></div>
<div class="t" style="left:295.5px;top:409.5px;color:#e0e0e0;font-size:9px;font-weight:bold">B</div>
<div class="t" style="left:309px;top:409.5px;color:#e0e0e0;font-size:9px;font-style:italic;font-family:'Liberation Serif',serif">I</div>
<svg class="a" style="left:321px;top:409.5px" width="48" height="9">
<g fill="#d8d8d8"><rect x="1" y="1" width="1.6" height="1.6"/><rect x="1" y="4.8" width="1.6" height="1.6"/><rect x="4" y="0.8" width="4" height="1"/><rect x="4" y="2.5" width="4" height="1"/><rect x="4" y="4.6" width="4" height="1"/><rect x="4" y="6.3" width="4" height="1"/>
<rect x="14.5" y="0.6" width="0.9" height="2.6"/><rect x="14.5" y="4.6" width="0.9" height="2.6"/><rect x="17" y="0.8" width="4" height="1"/><rect x="17" y="2.5" width="4" height="1"/><rect x="17" y="4.6" width="4" height="1"/><rect x="17" y="6.3" width="4" height="1"/>
<rect x="26" y="1.8" width="3" height="0.9"/><rect x="27" y="0.8" width="0.9" height="3"/><rect x="30" y="1" width="4" height="1"/><rect x="30" y="2.6" width="4" height="1"/><rect x="26" y="5.5" width="8" height="1.2"/>
<rect x="38" y="1.8" width="3" height="0.9"/><rect x="39" y="0.8" width="0.9" height="3"/><rect x="42" y="1" width="4" height="1"/><rect x="42" y="2.6" width="4" height="1"/><rect x="38" y="5.5" width="8" height="1.2"/></g>
</svg>
<div class="a" style="left:236px;top:422px;width:98px;height:8.6px;background:#3c3c3c"></div>
<div class="a" style="left:335px;top:422px;width:9px;height:8.6px;background:#3c3c3c"></div>
<div class="chev" style="left:338px;top:424.3px;border-color:#bbb"></div>
<svg class="a" style="left:345.5px;top:421.8px" width="21" height="10"><circle cx="4.5" cy="4.6" r="3.8" fill="none" stroke="#d0d0d0" stroke-width="0.9"/><path d="M4.5 0.8 V8.4 M0.7 4.6 H8.3 M2 2 L7 7.2 M7 2 L2 7.2" stroke="#d0d0d0" stroke-width="0.6"/><path d="M10.8 2 H14 L15 3 H19.5 V8.8 H10.8 Z M10.8 4 H19.5" fill="none" stroke="#d0d0d0" stroke-width="0.9"/></svg>
<div class="t rp pl" style="right:400.6px;top:411px">Title</div>
<div class="t rp pl" style="right:400.6px;top:421.3px">Target</div>
<div class="a" style="left:402.5px;top:408px;width:48px;height:11px;background:#4e4e4e"></div>
<div class="a" style="left:402.5px;top:421px;width:48px;height:10px;background:#4e4e4e"></div>
<div class="chev" style="left:443.5px;top:424.3px;border-color:#666"></div>
<svg class="a" style="left:590.5px;top:410px" width="9" height="9"><circle cx="4.5" cy="4.5" r="3.8" fill="none" stroke="#ddd" stroke-width="0.9"/><text x="4.5" y="6.7" font-size="6.3" text-anchor="middle" font-family="Liberation Sans" font-weight="bold" fill="#ddd">?</text></svg>
<div class="a" style="left:296px;top:438px;width:72.8px;height:11.4px;border:1px solid #a8a8a8;border-radius:6px"></div>
<div class="t rp" style="left:306.5px;letter-spacing:-0.024px;top:441px;color:#e4e4e4">Page Properties...</div>
<div class="a" style="left:375px;top:437.6px;width:85.4px;height:11.4px;border-radius:6px;background:#4f4f4f"></div>
<div class="t rp" style="left:401.5px;letter-spacing:0.200px;top:440.8px;color:#7d7d7d">List Item...</div>
<div class="a" style="left:593px;top:457px;width:0;height:0;border-left:3px solid transparent;border-right:3px solid transparent;border-bottom:3.5px solid #e8e8e8"></div>
</body></html>
